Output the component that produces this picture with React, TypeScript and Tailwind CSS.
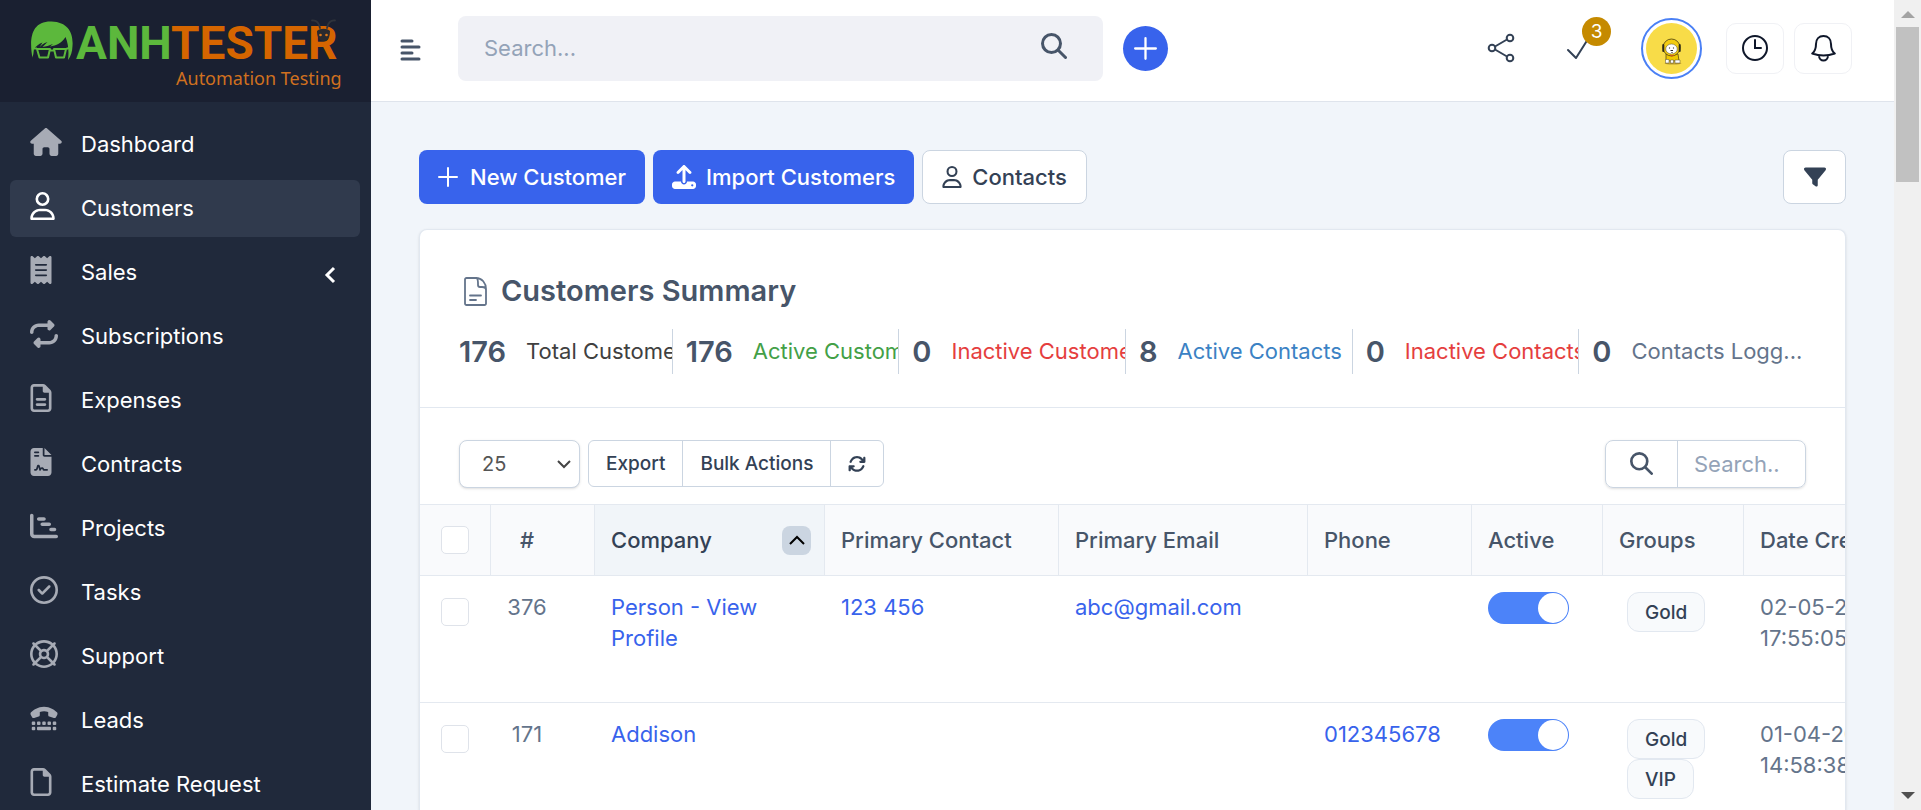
import { FaHouse, FaRegUser, FaReceipt, FaRepeat, FaRegFileLines, FaFileContract, FaChartGantt, FaRegCircleCheck, FaRegLifeRing, FaTty, FaRegFile, FaUpload, FaFilter, FaArrowsRotate } from "react-icons/fa6";
import type { ComponentType, ReactNode } from "react";

type Item = { label: string; icon: ComponentType<{ className?: string }>; w: string; active?: boolean; sub?: boolean };

const items: Item[] = [
  { label: "Dashboard", icon: FaHouse, w: "w-8" },
  { label: "Customers", icon: FaRegUser, w: "w-[25px]", active: true },
  { label: "Sales", icon: FaReceipt, w: "w-[22px]", sub: true },
  { label: "Subscriptions", icon: FaRepeat, w: "w-7" },
  { label: "Expenses", icon: FaRegFileLines, w: "w-[22px]" },
  { label: "Contracts", icon: FaFileContract, w: "w-[22px]" },
  { label: "Projects", icon: FaChartGantt, w: "w-7" },
  { label: "Tasks", icon: FaRegCircleCheck, w: "w-7" },
  { label: "Support", icon: FaRegLifeRing, w: "w-7" },
  { label: "Leads", icon: FaTty, w: "w-7" },
  { label: "Estimate Request", icon: FaRegFile, w: "w-[22px]" },
];

function Logo() {
  return (
    <a href="#" aria-label="Anh Tester" className="flex h-[102px] shrink-0 items-center bg-[#1a2031] pl-[30px]">
      <svg width="320" height="76" viewBox="0 0 320 76" aria-hidden="true">
        <path fill="#5cb83c" d="M2.500 45C-1 26 1 8 21.500 8.500 38 9 43.500 20 42.500 33c-.3 6-1.500 10-4.500 14 1-8 .500-16-2.500-23-4 6.500-9 8.500-15.500 9.500l3-2.500c-4 1.500-7 2.500-10.500 3l5-5c-4 1-6 3-8 5.500l3-5c-4 1.500-7 4-8.500 6.500-.500 3-.500 6-1.500 8z" />
        <g fill="none" stroke="#5cb83c" strokeWidth="2" strokeLinejoin="round">
          <path d="M7 36h13l-2 8.500H9.500zM24 36h12l-2 8.500h-8zM20 37.500h4M4 35.500h3M36 36l3-1" />
        </g>
        <text x="46" y="46" fontFamily="Roboto" fontWeight="700" fontSize="46" fill="#5cb83c">ANH</text>
        <text x="141" y="46" fontFamily="Roboto" fontWeight="700" fontSize="46" fill="#d56500">TESTER</text>
        <text x="146" y="72" fontFamily="Noto Sans" fontSize="18" fill="#d0701f">Automation Testing</text>
        <g fill="none" stroke="#30343c" strokeWidth="1.800" strokeLinecap="round">
          <path d="M290 15c-1-5-3-8-8-7.500M297 15c1-5 3-8 8-7.500" />
        </g>
        <path fill="#2a2a2e" d="M287 18c3-3 10-3 13 0 0 6-2 10-6.500 10S287 24 287 18z" />
        <circle cx="290.500" cy="22" r="1.300" fill="#e07818" /><circle cx="296.500" cy="22" r="1.300" fill="#e07818" />
      </svg>
    </a>
  );
}

function Sidebar() {
  return (
    <aside className="flex w-[371px] shrink-0 flex-col overflow-hidden bg-[#20293b]">
      <Logo />
      <nav className="flex flex-col gap-[7px] pl-[10px] pr-[11px] pt-[14px]">
        {items.map(({ label, icon: Icon, w, active, sub }) => (
          <a key={label} href="#" className={`flex h-[57px] shrink-0 items-center rounded-md px-5 text-[22px] text-white ${active ? "bg-[#303a4d]" : ""}`}>
            <span className="mb-[5px] flex w-[51px] items-center">
              <Icon className={`h-7 ${w} ${active ? "text-white" : "text-[#a7abb5]"}`} />
            </span>
            <span className="flex-1">{label}</span>
            {sub && (
              <svg width="12" height="18" viewBox="0 0 12 18" className="mr-1 mt-1" fill="none" stroke="white" strokeWidth="3" aria-hidden="true"><path d="M10 2 3 9l7 7" /></svg>
            )}
          </a>
        ))}
      </nav>
    </aside>
  );
}

function Plus({ size }: { size: number }) {
  return (
    <svg width={size} height={size} viewBox="0 0 20 20" fill="none" stroke="currentColor" strokeWidth="2" strokeLinecap="round" aria-hidden="true"><path d="M10 1v18M1 10h18" /></svg>
  );
}

function SearchIcon({ size }: { size: number }) {
  return (
    <svg width={size} height={size} viewBox="0 0 26 26" fill="none" stroke="currentColor" strokeWidth="3" strokeLinecap="round" aria-hidden="true"><circle cx="10.500" cy="10.500" r="9" /><path d="m17.500 17.500 7 7" /></svg>
  );
}

function Avatar() {
  return (
    <button aria-label="Profile" className="flex size-[61px] items-center justify-center rounded-full border-2 border-[#4a80f5] bg-white">
      <svg width="51" height="51" viewBox="0 0 51 51" aria-hidden="true">
        <circle cx="25.500" cy="25.500" r="25.500" fill="#f8dc48" />
        <ellipse cx="27" cy="40.500" rx="8.500" ry="0.900" fill="#b89a30" />
        <path d="M20 31h12l1 7h-13z" fill="#f0c800" stroke="#5a4c14" strokeWidth="0.800" />
        <circle cx="25.500" cy="24.500" r="8.500" fill="#f3cc10" stroke="#4a3f14" strokeWidth="0.800" />
        <ellipse cx="25.500" cy="26" rx="5.800" ry="5" fill="#fff" stroke="#6b5f30" strokeWidth="0.600" />
        <path d="M17.300 22v6M33.700 22v6" stroke="#2c2818" strokeWidth="2" strokeLinecap="round" />
        <path d="M23.500 24.500v1M27.500 24.500v1M24.500 27.500h2.500M26 29v1" stroke="#222" strokeWidth="1.100" />
        <path d="M19.500 36.500h3.500v3.500h-3.500zM24.500 37h3v3h-3zM29 37h5v3h-5z" fill="#fff" stroke="#5a5030" strokeWidth="0.500" />
        <path d="m24 32 2 1 2-1" fill="none" stroke="#d84a20" strokeWidth="1" />
      </svg>
    </button>
  );
}

function Header() {
  return (
    <header className="flex h-[102px] shrink-0 items-center border-b border-[#dfe4ec] bg-white pb-[5px] pl-[29px] pr-[42px]">
      <button aria-label="Toggle menu" className="mt-1 text-[#475569]">
        <svg width="22" height="22" viewBox="0 0 22 22" fill="none" stroke="currentColor" strokeWidth="3" strokeLinecap="round" aria-hidden="true"><path d="M2 2h10M2 8h17M2 14h10M2 20h17" /></svg>
      </button>
      <div className="ml-9 flex h-[65px] w-[645px] items-center rounded-lg bg-[#f0f1f6] pl-[26px] pr-9">
        <input aria-label="Search" placeholder="Search..." className="min-w-0 flex-1 bg-transparent text-[22px] text-slate-700 outline-none placeholder:text-[#94a3b8]" />
        <button aria-label="Run search" className="mb-1 text-[#475569]"><SearchIcon size={26} /></button>
      </div>
      <button aria-label="Quick create" className="ml-5 flex size-[45px] items-center justify-center rounded-full bg-[#3863ec] text-white"><Plus size={23} /></button>
      <div className="ml-auto flex items-center">
        <button aria-label="Share" className="mr-[51px] text-[#334155]">
          <svg width="28" height="30" viewBox="0 0 28 30" fill="none" stroke="currentColor" strokeWidth="2" aria-hidden="true"><circle cx="5" cy="15" r="3.300" /><circle cx="23" cy="5" r="3.300" /><circle cx="23" cy="25" r="3.300" /><path d="m8 13.500 12-7M8 16.500l12 7" /></svg>
        </button>
        <button aria-label="Todo items" className="relative mr-[51px] text-[#334155]">
          <svg width="24" height="24" viewBox="0 0 24 24" fill="none" stroke="currentColor" strokeWidth="2" strokeLinecap="round" strokeLinejoin="round" aria-hidden="true"><path d="m2 14 8 8L22 3" /></svg>
          <span className="absolute -right-[21px] -top-[19px] flex size-[29px] items-center justify-center rounded-full bg-[#c58a00] text-[19px] text-white">3</span>
        </button>
        <Avatar />
        <button aria-label="Timers" className="ml-6 flex h-[51px] w-[58px] items-center justify-center rounded-[10px] border border-[#f0f1f5] text-[#0f172a]">
          <svg width="28" height="28" viewBox="0 0 28 28" fill="none" stroke="currentColor" strokeWidth="2" strokeLinecap="round" aria-hidden="true"><circle cx="14" cy="14" r="12" /><path d="M14 6v8h6" /></svg>
        </button>
        <button aria-label="Notifications" className="ml-[10px] flex h-[51px] w-[58px] items-center justify-center rounded-[10px] border border-[#f0f1f5] text-[#0f172a]">
          <svg width="25" height="27" viewBox="0 0 25 27" fill="none" stroke="currentColor" strokeWidth="2" strokeLinejoin="round" aria-hidden="true"><path d="M1.200 18.500C4 16.500 5 13 5 9c0-5 3-8 7.500-8S20 4 20 9c0 4 1 7.500 3.800 9.500-7 2.500-15.600 2.500-22.600 0zM8 20.500c0 6.500 9 6.500 9 0" /></svg>
        </button>
      </div>
    </header>
  );
}

const stats = [
  { n: "176", label: "Total Customers", color: "text-[#404040]" },
  { n: "176", label: "Active Customers", color: "text-[#43a047]" },
  { n: "0", label: "Inactive Customers", color: "text-[#e53e3e]" },
  { n: "8", label: "Active Contacts", color: "text-[#3b82c4]" },
  { n: "0", label: "Inactive Contacts", color: "text-[#e53e3e]" },
  { n: "0", label: "Contacts Logg...", color: "text-[#64748b]" },
];

function Box({ label }: { label: string }) {
  return <input type="checkbox" aria-label={label} className="block size-[28px] shrink-0 appearance-none rounded-[5px] border border-[#dfe3ea] bg-white" />;
}

function Th({ children, sorted = false }: { children?: ReactNode; sorted?: boolean }) {
  return (
    <th className={`h-[72px] border-y border-r border-[#e4e9f0] font-medium ${sorted ? "bg-[#f1f5f9] pl-4 pr-[13px] text-[#334155]" : "bg-[#f9fafc] px-4 text-[#475569]"}`}>
      {children}
    </th>
  );
}

const rows = [
  { id: "376", company: "Person - View Profile", contact: "123 456", email: "abc@gmail.com", phone: "", groups: ["Gold"], date: "02-05-2025", time: "17:55:05" },
  { id: "171", company: "Addison", contact: "", email: "", phone: "012345678", groups: ["Gold", "VIP"], date: "01-04-2025", time: "14:58:38" },
];

function Switch({ label }: { label: string }) {
  return (
    <label className="relative block h-8 w-[81px]">
      <input type="checkbox" defaultChecked aria-label={label} className="peer sr-only" />
      <span className="flex h-8 items-center justify-end rounded-full bg-[#4c83f9] p-px"><span className="size-[30px] rounded-full bg-white" /></span>
    </label>
  );
}

export default function App() {
  return (
    <div className="flex h-screen overflow-hidden bg-[#f1f5fa] font-['Inter',sans-serif] text-[22px] leading-[31px]">
      <Sidebar />
      <div className="flex min-w-0 flex-1 flex-col">
        <Header />
        <main className="flex min-h-0 flex-1 flex-col px-12 pt-12">
          <div className="flex items-center gap-2 font-medium">
            <button className="flex h-[54px] items-center gap-3 rounded-lg bg-[#3863ec] px-[19px] text-white"><Plus size={20} />New Customer</button>
            <button className="flex h-[54px] items-center gap-[10px] rounded-lg bg-[#3863ec] px-[19px] text-white"><FaUpload className="size-6" />Import Customers</button>
            <button className="flex h-[54px] items-center gap-[10px] rounded-lg border border-[#cbd5e1] bg-white px-[19px] text-[#334155]"><FaRegUser className="h-[22px] w-5" />Contacts</button>
            <button aria-label="Filters" className="ml-auto flex h-[54px] w-[63px] items-center justify-center rounded-lg border border-[#cbd5e1] bg-white text-[#334155]"><FaFilter className="size-[22px]" /></button>
          </div>
          <section className="mt-[25px] flex min-h-0 flex-1 flex-col overflow-hidden rounded-t-lg border border-b-0 border-[#e2e8f0] bg-white shadow-sm">
            <div className="border-b border-[#e2e8f0] px-[39px] pb-[33px] pt-[43px]">
              <h4 className="flex items-center gap-[14px] pl-[5px] text-[29px] font-semibold leading-9 text-[#475569]">
                <svg width="23" height="29" viewBox="0 0 23 29" fill="none" stroke="#64748b" strokeWidth="1.800" strokeLinejoin="round" strokeLinecap="round" aria-hidden="true"><path d="M13 1H2.500A1.500 1.500 0 0 0 1 2.500v24A1.500 1.500 0 0 0 2.500 28h18a1.500 1.500 0 0 0 1.500-1.500V12C22 6 18 1 12 1c1.800.500 2 2.500 2 5v2a2 2 0 0 0 2 2h2c2 0 4 0 4 3M6 18.500h11M6 23h6" /></svg>
                Customers Summary
              </h4>
              <dl className="mt-5 grid grid-cols-6 gap-[13px]">
                {stats.map((s) => (
                  <div key={s.label} className="flex h-[45px] items-center overflow-hidden whitespace-nowrap border-r border-[#cbd5e1] last:border-r-0">
                    <dd className="mr-5 text-[29px] font-semibold text-[#475569]">{s.n}</dd>
                    <dt className={s.color}>{s.label}</dt>
                  </div>
                ))}
              </dl>
            </div>
            <div className="flex items-start px-[39px] pb-4 pt-8 text-[19px] font-medium text-[#334155]">
              <div className="relative">
                <select aria-label="Rows per page" defaultValue="25" className="block h-12 w-[121px] appearance-none rounded-lg border border-[#cbd5e1] bg-white pl-[22px] text-[20px] font-normal text-[#555] shadow-sm"><option>25</option><option>50</option></select>
                <svg width="14" height="10" viewBox="0 0 14 10" className="pointer-events-none absolute right-[9px] top-5" fill="none" stroke="#444" strokeWidth="2" aria-hidden="true"><path d="m1 1 6 6 6-6" /></svg>
              </div>
              <div className="ml-2 flex h-[47px] divide-x divide-[#cbd5e1] rounded-md border border-[#cbd5e1]">
                <button className="px-[17px]">Export</button>
                <button className="px-[17px]">Bulk Actions</button>
                <button aria-label="Reload" className="px-[17px]"><FaArrowsRotate className="size-[18px]" /></button>
              </div>
              <div className="ml-auto flex h-12 w-[201px] rounded-lg border border-[#cbd5e1] shadow-sm">
                <span className="flex w-[72px] items-center justify-center border-r border-[#cbd5e1] pb-px text-[#475569]"><SearchIcon size={23} /></span>
                <input aria-label="Search customers" placeholder="Search.." className="w-0 flex-1 px-4 text-[22px] font-normal outline-none placeholder:text-[#94a3b8]" />
              </div>
            </div>
            <div className="min-h-0 flex-1 overflow-hidden">
              <table className="w-[1600px] table-fixed border-separate border-spacing-0 text-left">
                <colgroup>
                  <col className="w-[71px]" /><col className="w-[104px]" /><col className="w-[230px]" /><col className="w-[234px]" /><col className="w-[249px]" /><col className="w-[164px]" /><col className="w-[131px]" /><col className="w-[141px]" /><col />
                </colgroup>
                <thead>
                  <tr className="text-left">
                    <Th><div className="flex pl-[5px]"><Box label="Select all" /></div></Th>
                    <Th><div className="w-10 text-center">#</div></Th>
                    <Th sorted>
                      <div className="flex items-center justify-between">Company
                        <span className="flex size-[29px] items-center justify-center rounded-lg bg-[#cbd5e1]"><svg width="16" height="10" viewBox="0 0 16 10" fill="none" stroke="#000" strokeWidth="2" aria-hidden="true"><path d="m1 9 7-7 7 7" /></svg></span>
                      </div>
                    </Th>
                    <Th>Primary Contact</Th><Th>Primary Email</Th><Th>Phone</Th><Th>Active</Th><Th>Groups</Th><Th>Date Created</Th>
                  </tr>
                </thead>
                <tbody className="text-[#64748b]">
                  {rows.map((r) => (
                    <tr key={r.id} className="align-top *:h-[127px] *:border-b *:border-[#e4e9f0] *:px-4 *:pt-4">
                      <td><div className="flex pl-[5px] pt-[6px]"><Box label={`Select ${r.company}`} /></div></td>
                      <td><div className="w-10 text-center">{r.id}</div></td>
                      <td><a href="#" className="text-[#3863ec]">{r.company}</a></td>
                      <td>{r.contact && <a href="#" className="text-[#3863ec]">{r.contact}</a>}</td>
                      <td>{r.email && <a href="#" className="text-[#3863ec]">{r.email}</a>}</td>
                      <td>{r.phone && <a href="#" className="text-[#3863ec]">{r.phone}</a>}</td>
                      <td><Switch label={`${r.company} active`} /></td>
                      <td>
                        <div className="flex flex-col items-start pl-2">
                          {r.groups.map((g) => <span key={g} className="flex h-10 items-center rounded-xl border border-[#e2e8f0] bg-[#f8fafc] px-[17px] text-[19px] font-medium text-[#334155]">{g}</span>)}
                        </div>
                      </td>
                      <td>{r.date}<br />{r.time}</td>
                    </tr>
                  ))}
                </tbody>
              </table>
            </div>
          </section>
        </main>
      </div>
      <div className="flex w-[27px] shrink-0 flex-col items-center bg-[#f0f0f0] py-[10px]" aria-hidden="true">
        <svg width="14" height="8" viewBox="0 0 14 8" fill="#a3a3a3"><path d="M0 8 7 1l7 7z" /></svg>
        <span className="mt-[9px] h-[155px] w-[23px] bg-[#c1c1c1]" />
        <svg width="14" height="8" viewBox="0 0 14 8" className="mt-auto" fill="#505050"><path d="m0 0 7 7 7-7z" /></svg>
      </div>
    </div>
  );
}
